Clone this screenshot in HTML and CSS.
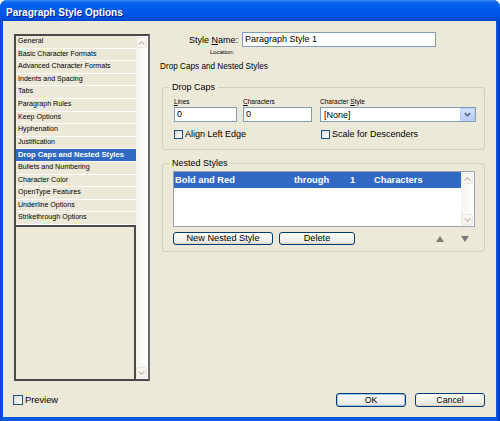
FILE: index.html
```html
<!DOCTYPE html>
<html>
<head>
<meta charset="utf-8">
<title>Paragraph Style Options</title>
<link rel="stylesheet" href="styles.css">
</head>
<body>
<div class="window">
  <div class="titlebar">Paragraph Style Options</div>
  <div class="client">
    <div class="main">
      <div class="listbox">
        <div class="cats">
          <div class="cat">General</div>
          <div class="cat">Basic Character Formats</div>
          <div class="cat">Advanced Character Formats</div>
          <div class="cat">Indents and Spacing</div>
          <div class="cat">Tabs</div>
          <div class="cat">Paragraph Rules</div>
          <div class="cat">Keep Options</div>
          <div class="cat">Hyphenation</div>
          <div class="cat">Justification</div>
          <div class="cat sel">Drop Caps and Nested Styles</div>
          <div class="cat">Bullets and Numbering</div>
          <div class="cat">Character Color</div>
          <div class="cat">OpenType Features</div>
          <div class="cat">Underline Options</div>
          <div class="cat">Strikethrough Options</div>
          <div class="blank"></div>
        </div>
        <div class="vscroll">
          <div class="sbtn"><svg width="7" height="4" viewBox="0 0 7 4"><polyline points="0.5,3.5 3.5,0.8 6.5,3.5" /></svg></div>
          <div class="sbtn"><svg width="7" height="4" viewBox="0 0 7 4"><polyline points="0.5,0.5 3.5,3.2 6.5,0.5" /></svg></div>
        </div>
      </div>

      <div class="panel">
        <div class="namerow">
          <span class="namelabel">Style <u>N</u>ame:</span>
          <div class="input name">Paragraph Style 1</div>
        </div>
        <div class="location">Location:</div>
        <div class="section">Drop Caps and Nested Styles</div>

        <fieldset class="group">
          <legend>Drop Caps</legend>
          <div class="dcgrid">
            <span class="small"><u>L</u>ines</span>
            <span class="small"><u>C</u>haracters</span>
            <span class="small">Character <u>S</u>tyle</span>
            <div class="input w-lines">0</div>
            <div class="input w-chars">0</div>
            <div class="select">
              <span class="seltext">[None]</span>
              <span class="ddbtn"><svg width="7" height="5" viewBox="0 0 7 5"><polyline points="0.8,1 3.5,3.7 6.2,1" /></svg></span>
            </div>
            <div class="check span2"><span class="box"></span>Align Left Edge</div>
            <div class="check scale"><span class="box"></span>Scale for Descenders</div>
          </div>
        </fieldset>

        <fieldset class="group nested">
          <legend>Nested Styles</legend>
          <div class="nbody">
            <div class="nlist">
              <div class="nrows">
                <div class="nrow sel">
                  <span>Bold and Red</span>
                  <span>through</span>
                  <span>1</span>
                  <span>Characters</span>
                </div>
              </div>
              <div class="vscroll nscroll">
                <div class="sbtn"><svg width="7" height="4" viewBox="0 0 7 4"><polyline points="0.5,3.5 3.5,0.8 6.5,3.5" /></svg></div>
                <div class="sbtn"><svg width="7" height="4" viewBox="0 0 7 4"><polyline points="0.5,0.5 3.5,3.2 6.5,0.5" /></svg></div>
              </div>
            </div>
            <div class="nbtns">
              <button class="btn newnested">New Nested Style</button>
              <button class="btn delete">Delete</button>
              <span class="tri up"></span>
              <span class="tri down"></span>
            </div>
          </div>
        </fieldset>
      </div>
    </div>

    <div class="footer">
      <div class="check preview"><span class="box big"></span>Preview</div>
      <button class="btn ok">OK</button>
      <button class="btn cancel">Cancel</button>
    </div>
  </div>
</div>
</body>
</html>
```

FILE: styles.css
```css
* { box-sizing: border-box; }

html, body {
  margin: 0;
  padding: 0;
}

body {
  width: 500px;
  height: 421px;
  background: #ffffff;
  font-family: "Liberation Sans", Arial, sans-serif;
  font-size: 9px;
  color: #000;
  overflow: hidden;
}

.window {
  width: 500px;
  height: 421px;
  display: flex;
  flex-direction: column;
  background: linear-gradient(to right, #0842D0 0, #0A58E6 3px, #0A58E6 496px, #0333B8 500px);
  border-radius: 7px 7px 0 0;
  overflow: hidden;
}

.titlebar {
  height: 21px;
  flex: none;
  padding: 3px 0 0 6px;
  line-height: 19px;
  font-size: 10px;
  font-weight: bold;
  color: #fff;
  text-shadow: 1px 1px 0 #0A1E8C;
  background: linear-gradient(to bottom, #3C8DFA 0, #1168F0 2px, #0560EE 5px, #0058EA 10px, #0055E6 15px, #004DD8 19px, #0047CC 21px);
}

.client {
  flex: 1;
  margin: 0 4px 4px 3px;
  background: #ECE9D8;
  padding: 11px 11px 0 11px;
  display: flex;
  flex-direction: column;
}

.main {
  display: flex;
  height: 349px;
}

/* ---------- category list ---------- */
.listbox {
  margin-top: 2px;
  width: 136px;
  height: 347px;
  border: 2px solid #4a4a4a;
  border-right-color: #6a6a6a;
  display: flex;
  background: #fff;
}

.cats {
  width: 120px;
  display: flex;
  flex-direction: column;
}

.cat {
  height: 12.6px;
  flex: none;
  border-bottom: 1px solid #fff;
  background: #ECE9D8;
  padding-left: 2px;
  font-size: 7.1px;
  line-height: 11.6px;
  white-space: nowrap;
  overflow: hidden;
}

.cat.sel {
  background: #316AC5;
  color: #fff;
  font-weight: bold;
  font-size: 7.6px;
}

.blank {
  flex: 1;
  background: #ECE9D8;
  border-top: 2px solid #4a4a4a;
  border-right: 2px solid #4a4a4a;
}

.vscroll {
  width: 12px;
  display: flex;
  flex-direction: column;
  justify-content: space-between;
  background: linear-gradient(to right, #F4F3EE, #FFFFFF);
}

.sbtn {
  height: 11px;
  margin: 1px 1px 1px 0;
  border: 1px solid #E9E7DF;
  border-radius: 2px;
  background: #F6F5F0;
  display: flex;
  align-items: center;
  justify-content: center;
}

.sbtn svg polyline {
  fill: none;
  stroke: #C4C2B6;
  stroke-width: 1.4;
}

/* ---------- right panel ---------- */
.panel {
  margin-left: 10px;
  width: 325px;
}

.namerow {
  display: flex;
  align-items: center;
  height: 15px;
  padding-left: 29px;
}

.namelabel {
  margin-right: 4px;
}

.input {
  height: 15px;
  background: #fff;
  border: 1px solid #7F9DB9;
  padding-left: 2px;
  line-height: 13px;
  font-size: 9px;
  white-space: nowrap;
}

.input.name { width: 194px; }
.input.w-lines { width: 63px; }
.input.w-chars { width: 69px; }

.location {
  margin-top: 1px;
  padding-left: 50px;
  height: 8px;
  line-height: 8px;
  font-size: 6px;
}

.section {
  margin-top: 5px;
  height: 12px;
  line-height: 12px;
  font-size: 8.2px;
}

.group {
  margin: 9px 0 0 2px;
  padding: 0;
  width: 323px;
  min-width: 0;
  border: 1px solid #D0D0BF;
  border-radius: 3px;
}

.group legend {
  margin-left: 6px;
  padding: 0 3px;
  line-height: 10px;
  font-size: 9px;
}

.group.nested {
  margin-top: 8px;
}

.dcgrid {
  display: grid;
  grid-template-columns: 69px 77px 156px;
  align-items: center;
  padding: 5px 0 9px 11px;
}

.small {
  font-size: 6.5px;
  line-height: 10px;
  height: 10px;
}

.select {
  width: 156px;
  height: 15px;
  background: #fff;
  border: 1px solid #7F9DB9;
  display: flex;
  align-items: center;
  justify-content: space-between;
}

.seltext {
  padding-left: 3px;
  font-size: 9px;
}

.ddbtn {
  width: 15px;
  height: 13px;
  border: 1px solid #BCCDF7;
  border-radius: 1px;
  background: linear-gradient(to bottom, #D6E2FE, #BACDFA);
  display: flex;
  align-items: center;
  justify-content: center;
}

.ddbtn svg polyline {
  fill: none;
  stroke: #4D6185;
  stroke-width: 1.6;
}

.check {
  display: flex;
  align-items: center;
  height: 12px;
  margin-top: 6px;
  font-size: 9px;
  white-space: nowrap;
}

.check.span2 { grid-column: 1 / 3; }
.check.scale { margin-left: 1px; }

.box {
  width: 9px;
  height: 9px;
  margin-right: 2px;
  border: 1px solid #1C5180;
  background: linear-gradient(135deg, #DCDCD4, #FFFFFF);
  flex: none;
}

.box.big {
  width: 10px;
  height: 10px;
  margin-right: 2px;
}

/* ---------- nested styles ---------- */
.nbody {
  padding: 3px 0 6px 10px;
}

.nlist {
  width: 302px;
  height: 56px;
  border: 1px solid #9AA3AC;
  background: #fff;
  display: flex;
}

.nrows {
  flex: 1;
}

.nrow {
  height: 16px;
  display: grid;
  grid-template-columns: 119px 56px 24px 1fr;
  align-items: center;
  padding-left: 1px;
  font-size: 9.3px;
  font-weight: bold;
  white-space: nowrap;
}

.nrow.sel {
  background: #316AC5;
  color: #fff;
}

.nscroll {
  width: 13px;
}

.nbtns {
  display: flex;
  align-items: center;
  margin-top: 5px;
  height: 13px;
}

.btn {
  height: 13px;
  padding: 0;
  margin: 0;
  border: 1px solid #003C74;
  border-radius: 3px;
  background: linear-gradient(to bottom, #FFFFFF 0%, #F5F4EF 45%, #ECEBE5 80%, #D8D3C8 100%);
  font-family: "Liberation Sans", Arial, sans-serif;
  font-size: 9.2px;
  line-height: 11px;
  color: #000;
}

.btn.newnested { width: 100px; }
.btn.delete { width: 76px; margin-left: 6px; }

.tri {
  width: 0;
  height: 0;
  border-left: 4px solid transparent;
  border-right: 4px solid transparent;
}

.tri.up {
  margin-left: 81px;
  border-bottom: 6px solid #7C7C7C;
}

.tri.down {
  margin-left: 17px;
  border-top: 6px solid #7C7C7C;
}

/* ---------- footer ---------- */
.footer {
  display: flex;
  align-items: center;
  height: 14px;
  margin-top: 12px;
}

.check.preview {
  margin: 0 0 0 -1px;
  font-size: 9.3px;
}

.btn.ok,
.btn.cancel {
  width: 70px;
  height: 14px;
  font-size: 8.8px;
}

.btn.ok {
  margin-left: auto;
  box-shadow: inset 0 0 0 1px #A4C2F2;
}

.btn.cancel {
  margin-left: 9px;
}
```
